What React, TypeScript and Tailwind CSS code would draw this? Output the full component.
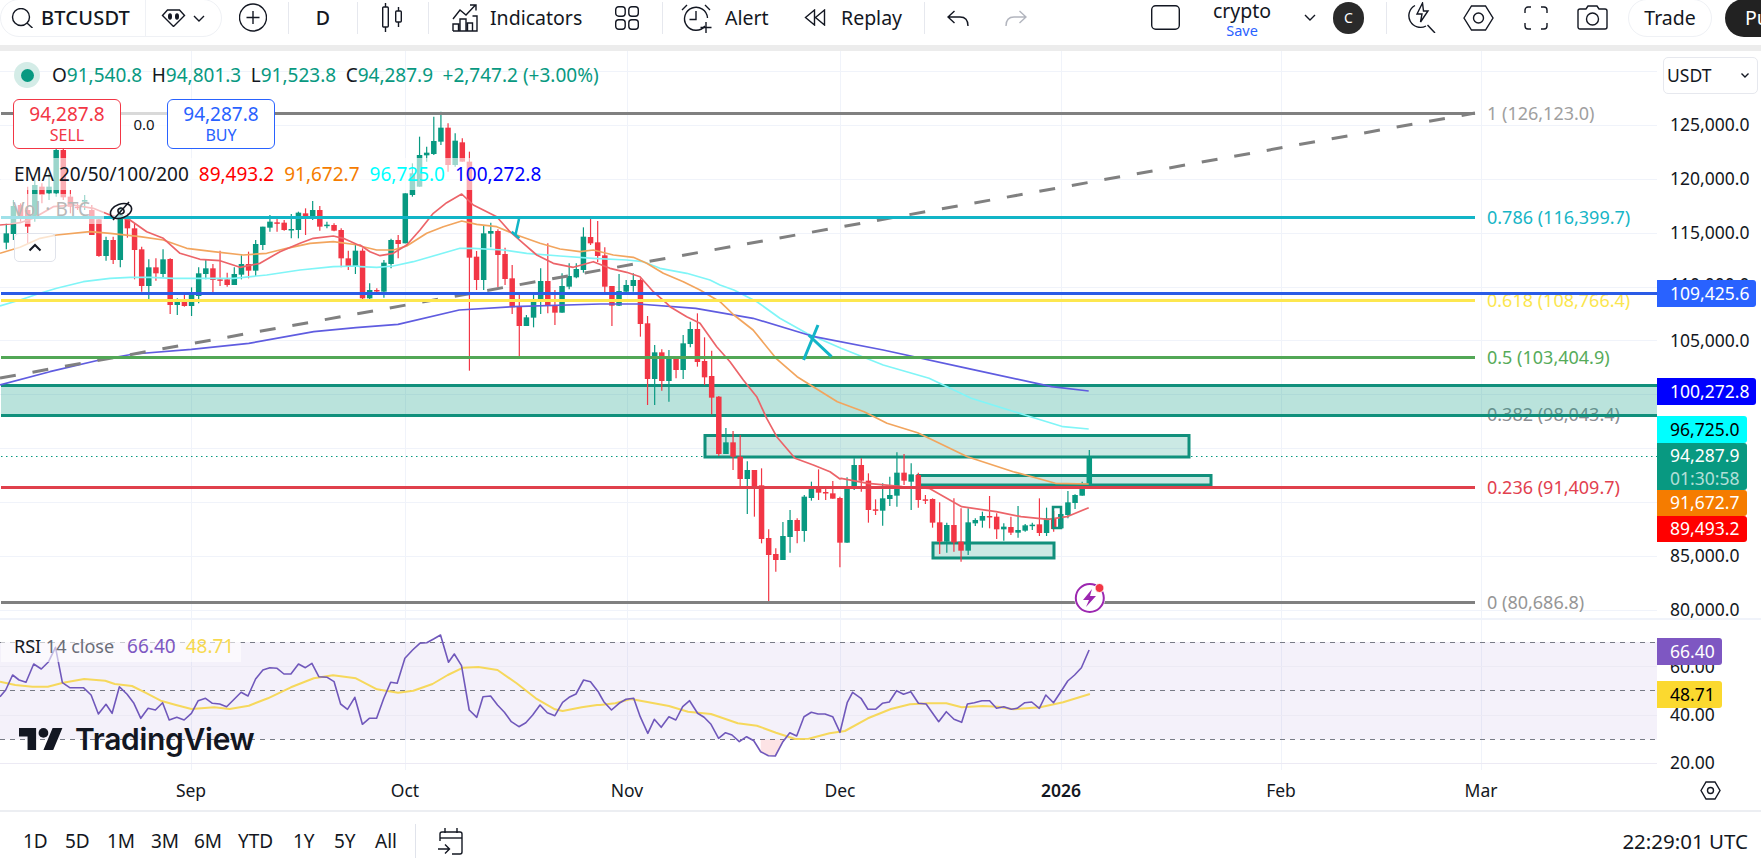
import React from "react";

type Row = [number, number, number, number, number];
const A: Row[] = [
[100,130,158,178,1],[30,48,132,150,1],[40,45,81,95,0],[-10,60,110,160,0],[-30,-15,85,95,1],[-20,-10,15,40,0],[-50,-10,10,30,1],[-150,-120,10,20,1],[-125,-120,22,30,0],[0,20,50,70,0],
[40,50,52,60,0],[15,30,35,60,1],[45,60,135,135,0],[85,88,198,200,0],[140,150,198,212,1],[140,150,210,222,0],[50,75,210,232,1],[70,80,115,143,0],[100,115,180,268,0],[170,178,288,305,0],
[208,232,288,333,1],[205,232,250,272,0],[178,208,252,262,1],[205,207,345,372,0],[325,327,345,375,1],[308,328,348,350,0],[292,310,348,378,1],[232,250,318,340,1],[210,235,252,268,1],[222,235,270,310,0],
[182,268,270,288,0],[248,268,285,290,0],[232,252,285,285,1],[196,222,254,268,1],[185,222,242,265,0],[150,162,242,258,1],[110,110,165,180,1],[75,95,113,125,1],[85,97,100,125,0],[90,98,120,122,0],
[72,117,119,145,1],[65,68,120,145,1],[55,70,84,135,0],[33,60,85,90,1],[48,60,110,122,0],[95,104,106,115,1],[100,105,122,124,0],[115,120,205,232,0],[182,205,228,240,0],[165,182,228,252,1],
];
const B: Row[] = [
[415,422,565,572,0],[520,540,565,572,1],[535,540,543,555,0],[450,458,545,563,1],[386,390,462,475,1],[375,390,402,445,0],[250,250,400,400,1],[160,190,255,260,1],[80,135,230,230,1],[110,128,136,155,1],
[20,93,132,135,1],[5,53,95,105,1],[40,53,165,185,0],[70,92,165,170,1],[85,97,155,155,0],[125,155,443,782,0],[423,440,510,540,0],[345,370,510,540,1],[338,363,371,412,1],[358,363,435,532,0],
[413,432,507,525,0],[465,505,592,612,0],[555,588,648,738,0],[615,622,648,648,1],[555,573,623,652,1],[475,513,575,612,1],[400,513,587,610,0],[540,587,608,645,0],[490,528,608,608,1],[460,498,530,538,1],
[460,477,502,505,1],[352,380,480,488,1],[325,381,400,405,0],[333,397,438,456,0],[412,436,530,555,0],[528,528,587,648,0],[492,543,587,588,1],[510,525,545,548,1],[490,510,528,545,1],[505,510,642,680,0],
];
const C: Row[] = [
[48,70,237,315,0],[135,157,237,315,1],[148,157,243,272,0],[150,173,243,305,1],[172,173,210,235,0],[105,130,210,237,1],[65,87,132,142,1],[40,87,186,200,0],[112,183,232,255,0],[152,228,293,343,0],
[288,290,462,468,0],[384,427,462,462,1],[393,427,470,510,0],[405,470,537,558,0],[484,510,537,642,1],[510,510,562,650,0],[505,556,717,730,0],[688,714,765,905,0],[745,762,780,815,0],[666,708,780,780,1],
[630,660,711,758,1],[655,660,693,730,0],[585,590,693,725,1],[545,562,594,602,1],[508,562,578,600,0],[565,576,578,600,0],[543,580,596,596,0],[590,594,728,802,0],[532,565,728,728,1],
];
const D: Row[] = [
[85,105,175,180,1],[85,105,152,185,0],[130,152,240,278,0],[208,238,241,255,0],[160,205,242,287,1],[140,195,207,228,1],[67,128,197,230,1],[72,128,152,165,0],[100,133,155,240,1],[128,135,210,233,0],
[195,208,210,222,0],[205,207,278,293,0],[217,277,335,372,0],[278,285,335,368,1],[205,285,337,365,0],[235,335,362,395,0],[235,277,362,375,1],[265,270,280,288,1],[245,258,272,293,1],[198,258,260,295,0],
[250,260,298,327,0],[280,290,298,332,1],[260,291,308,315,0],[228,300,308,323,1],[282,286,302,305,1],[278,284,286,300,1],[205,283,309,318,0],[233,265,309,318,1],[243,265,297,305,0],[240,252,295,297,1],
[183,217,255,265,1],[193,195,219,237,1],[155,167,197,197,1],[60,82,165,165,1],
];
const conv = (y0: number, rows: Row[]) => rows.map((r) => ({ hi: y0 + r[0] / 3, top: y0 + r[1] / 3, bot: y0 + r[2] / 3, lo: y0 + r[3] / 3, up: r[4] === 1 }));
const candles = [...conv(190, A), ...conv(110, B), ...conv(300, C), ...conv(430, D)];

const z = (x0: number, y0: number, sx: number, pts: number[][]) => pts.map(([x, y]) => `${(x0 + x / sx).toFixed(1)},${(y0 + y / 3).toFixed(1)}`).join(" ");

const ema20 = [
  z(0, 190, 3, [[0,105],[30,102],[60,98],[100,85],[160,50],[220,45],[280,55],[330,75],[390,90],[440,125],[490,145],[540,190],[600,208],[660,212],[720,232],[780,220],[840,185],[900,160],[940,145],[1000,138],[1030,145],[1075,165]]),
  z(360, 110, 3, [[0,405],[30,425],[60,437],[100,430],[140,405],[180,360],[220,310],[260,278],[305,252],[340,285],[370,300],[410,320],[450,365],[490,400],[530,435],[580,460],[640,472],[700,455],[750,475],[800,487],[840,500],[880,545],[920,580]]),
  z(620, 300, 3, [[150,20],[200,50],[240,70],[290,140],[330,185],[370,240],[410,290],[440,355],[470,410],[525,475],[580,495],[630,515],[660,537]]),
  z(600, 280, 2.613, [[630,595],[700,610],[790,620],[860,625],[945,680],[1035,695],[1100,710],[1170,718],[1220,710],[1277,683]]),
].join(" ");
const ema50 = [
  z(0, 190, 3, [[0,190],[60,172],[120,145],[170,135],[270,125],[330,130],[420,140],[490,150],[560,175],[640,185],[730,195],[800,190],[860,175],[930,160],[1000,155],[1075,165]]),
  z(360, 110, 3, [[0,408],[50,420],[100,420],[140,408],[200,370],[250,350],[305,333],[350,343],[410,350],[470,375],[540,400],[600,417],[660,425],[700,420],[760,435],[820,442],[860,460],[910,490],[970,515],[1020,540],[1080,575]]),
  z(600, 280, 2.613, [[350,105],[400,150],[460,235],[515,290],[620,365],[690,395],[750,430],[830,458],[960,530],[1080,575],[1190,610],[1277,612]]),
].join(" ");
const ema100 = [
  z(0, 190, 3, [[0,348],[60,330],[120,310],[170,295],[250,275],[330,265],[390,262],[450,262],[520,265],[600,265],[700,265],[800,255],[900,240],[1000,230],[1075,228]]),
  z(360, 110, 3, [[0,470],[50,472],[100,468],[160,455],[230,435],[300,415],[340,415],[430,420],[500,430],[600,438],[700,445],[800,450],[850,455],[900,475],[980,490],[1050,510],[1080,525]]),
  z(600, 280, 2.613, [[350,30],[410,65],[470,115],[540,160],[630,205],[740,255],[860,295],[970,355],[1110,405],[1210,440],[1277,447]]),
].join(" ");
const ema200 = [
  z(0, 280, 2.613, [[0,315],[130,275],[260,240],[350,222],[500,208],[650,190],[820,155],[930,143],[1040,133],[1200,90],[1340,80],[1568,72]]),
  z(600, 280, 2.613, [[100,72],[250,85],[400,115],[560,170],[740,210],[960,265],[1180,320],[1277,333]]),
].join(" ");
const rsi = [
  z(0, 600, 2.613, [[0,290],[15,270],[33,225],[50,240],[68,247],[88,192],[108,207],[127,185],[145,142],[163,248],[182,263],[218,263],[238,285],[257,342],[277,313],[293,340],[312,260],[332,283],[350,310],[368,355],[387,325],[406,330],[425,308],[442,360],[462,352],[481,360],[500,340],[518,302],[537,295],[555,310],[574,312],[592,320],[610,300],[630,277],[648,288],[668,237],[687,210],[705,203],[724,205],[742,222],[760,222],[780,192],[798,203],[815,190],[833,230],[855,232],[873,245],[890,312],[908,328],[927,292],[947,373],[965,355],[984,355],[1003,295],[1021,247],[1038,250],[1058,175],[1078,150],[1097,130],[1115,128],[1133,117],[1151,105],[1172,187],[1187,162],[1206,197],[1226,330],[1246,352],[1262,290],[1282,288],[1300,315],[1318,337],[1336,365],[1356,380],[1374,368],[1392,345],[1411,315],[1430,338],[1450,347],[1470,307],[1487,292],[1505,282],[1525,240],[1543,245],[1563,275]]),
  z(600, 600, 2.613, [[0,285],[10,305],[30,330],[50,310],[68,298],[88,295],[105,350],[125,400],[142,358],[160,382],[180,350],[198,360],[216,320],[234,302],[255,340],[272,352],[290,373],[310,415],[328,398],[345,405],[364,425],[383,410],[402,422],[420,455],[440,467],[458,468],[478,425],[496,398],[514,408],[533,350],[552,337],[570,342],[588,342],[608,350],[627,397],[646,308],[660,277],[682,295],[700,328],[720,328],[738,310],[756,306],[775,272],[793,283],[812,275],[832,310],[852,312],[885,365],[905,335],[925,358],[945,367],[960,312],[978,308],[998,302],[1018,302],[1036,325],[1055,320],[1075,328],[1090,325],[1110,308],[1128,306],[1148,325],[1165,285],[1185,308],[1204,275],[1222,243],[1240,225],[1258,203],[1278,150]]),
].join(" ");
const rsiMa = [
  z(0, 600, 2.613, [[0,245],[40,255],[85,260],[125,260],[165,248],[220,237],[275,242],[300,252],[345,258],[380,278],[420,302],[460,315],[500,327],[560,322],[600,327],[650,317],[700,295],[760,262],[820,235],[870,226],[930,235],[985,268],[1040,278],[1080,272],[1130,252],[1170,225],[1210,203],[1250,201],[1300,210],[1350,250],[1400,295],[1450,328],[1470,333],[1520,322],[1560,315]]),
  z(600, 600, 2.613, [[0,315],[40,310],[80,297],[120,305],[180,318],[230,335],[290,342],[360,370],[410,377],[460,398],[510,417],[545,416],[600,400],[640,393],[700,355],[760,327],[810,313],[860,310],[905,310],[945,322],[1000,318],[1040,320],[1080,328],[1150,322],[1210,307],[1280,282]]),
].join(" ");

const gridX = [191, 405, 627, 840, 1061, 1281, 1481];
const gridY = [71.5, 125.5, 179.5, 233.5, 287.5, 340.5, 394.5, 448.5, 502.5, 556.5, 610.5];

const Fib = ({ y, color, end = 1475 }: { y: number; color: string; end?: number }) => (
  <line x1="1" x2={end} y1={y} y2={y} stroke={color} strokeWidth="3" />
);

const fibLabels = [
  { y: 113, c: "#a0a0a0", t: "1 (126,123.0)" },
  { y: 217, c: "#16b5c6", t: "0.786 (116,399.7)" },
  { y: 300, c: "#fbe64f", t: "0.618 (108,766.4)" },
  { y: 357, c: "#56ab5a", t: "0.5 (103,404.9)" },
  { y: 414, c: "#8a8d92", t: "0.382 (98,043.4)" },
  { y: 487, c: "#e2404e", t: "0.236 (91,409.7)" },
  { y: 602, c: "#969696", t: "0 (80,686.8)" },
];

const axisLabels = [
  { y: 125, t: "125,000.0" }, { y: 179, t: "120,000.0" }, { y: 233, t: "115,000.0" }, { y: 285, t: "110,000.0" }, { y: 341, t: "105,000.0" }, { y: 556, t: "85,000.0" }, { y: 610, t: "80,000.0" },
];
const tags = [
  { top: 280, h: 27, w: 99, bg: "bg-[#2962ff]", fg: "text-white", t: "109,425.6" },
  { top: 378, h: 27, w: 99, bg: "bg-[#0000ff]", fg: "text-white", t: "100,272.8" },
  { top: 416, h: 27, w: 90, bg: "bg-[#00ffff]", fg: "text-black", t: "96,725.0" },
  { top: 490, h: 26, w: 90, bg: "bg-[#f57c00]", fg: "text-white", t: "91,672.7" },
  { top: 516, h: 26, w: 90, bg: "bg-[#ff0000]", fg: "text-white", t: "89,493.2" },
];

const Ico = ({ w, h, vb, className = "", children, sw = 1.4 }: { w: number; h: number; vb?: string; className?: string; children: React.ReactNode; sw?: number }) => (
  <svg width={w} height={h} viewBox={vb ?? `0 0 ${w} ${h}`} fill="none" stroke="currentColor" strokeWidth={sw} className={`shrink-0 text-[#131722] ${className}`}>
    {children}
  </svg>
);
const Divider = ({ cls }: { cls: string }) => <div className={`w-px h-[32px] bg-[#e6e8ee] shrink-0 ${cls}`} />;
const Chevron = ({ cls = "" }: { cls?: string }) => (
  <Ico w={12} h={7} className={cls}><polyline points="1,1 6,6 11,1" /></Ico>
);

function TopBar() {
  return (
    <div className="h-[45px] shrink-0 flex items-center pb-[10px] bg-white text-[19.5px] text-[#131722] overflow-hidden">
      <div className="w-[222px] h-[38px] self-start shrink-0 rounded-[19px] border border-[#eff1f5] flex items-center -mt-px">
        <Ico w={22} h={20} className="ml-[10px]"><circle cx="10" cy="9" r="8.5" /><line x1="16" y1="15" x2="21.5" y2="20" /></Ico>
        <span className="ml-[8px] w-[96px] text-[20px] font-medium tracking-[0.2px]">BTCUSDT</span>
        <div className="w-px h-[38px] bg-[#eff1f5] ml-[8px]" />
        <Ico w={25} h={18} className="ml-[15px]">
          <path d="M1.5 6.5 L6.5 1 H18.5 L23.5 6.5 L12.5 17.5 Z" />
          <ellipse cx="9" cy="7.5" rx="1.3" ry="2.5" fill="currentColor" />
          <ellipse cx="16" cy="7.5" rx="1.3" ry="2.5" fill="currentColor" />
        </Ico>
        <Chevron cls="ml-[7px]" />
      </div>
      <Ico w={28} h={29} className="ml-[17px]"><circle cx="14" cy="14.5" r="13.5" /><path d="M14 8v13M7.5 14.5h13" /></Ico>
      <Divider cls="ml-[21px]" />
      <div className="w-[68px] text-center font-medium shrink-0">D</div>
      <Divider cls="" />
      <Ico w={21} h={29} className="ml-[24px]">
        <path d="M3.5 0v4M3.5 24v5M16.5 4v4M16.5 19v5" />
        <rect x="0.7" y="4" width="5.6" height="20" rx="1" />
        <rect x="13.7" y="8" width="5.6" height="11" rx="1" />
      </Ico>
      <Divider cls="ml-[25px]" />
      <Ico w={26} h={28} className="ml-[23px]">
        <path d="M1 15 L8 6 L14 11 L23 1.5 M18 1 h6 v5.5" />
        <path d="M1 27 V20 H6.5 V27 M8 27 V15 H14 V27 M15.5 27 V19 H20.5 V27 M20.5 12 H25 V27 H1" />
      </Ico>
      <span className="ml-[12px] w-[93px] font-normal shrink-0 whitespace-nowrap">Indicators</span>
      <Ico w={24} h={24} className="ml-[32px]">
        <rect x="0.7" y="0.7" width="9.5" height="9.5" rx="3" /><rect x="13.8" y="0.7" width="9.5" height="9.5" rx="3" />
        <rect x="0.7" y="13.8" width="9.5" height="9.5" rx="3" /><rect x="13.8" y="13.8" width="9.5" height="9.5" rx="3" />
      </Ico>
      <Divider cls="ml-[23px]" />
      <Ico w={31} h={30} className="ml-[18px]">
        <path d="M24 23 A11.5 11.5 0 1 1 26.5 15" />
        <path d="M15 8v8.5H8.5" />
        <path d="M1 7 L6 2 M24 2 L29 7" />
        <path d="M25 19v11M19.5 24.5h11" />
      </Ico>
      <span className="ml-[13px] w-[45px] shrink-0">Alert</span>
      <Ico w={22} h={17} className="ml-[34px]">
        <path d="M10.5 1 L1.5 8.5 L10.5 16 Z M20.5 1 L11.5 8.5 L20.5 16 Z" />
      </Ico>
      <span className="ml-[15px] w-[61px] shrink-0">Replay</span>
      <Divider cls="ml-[22px]" />
      <Ico w={22} h={16} className="ml-[22px]"><path d="M7.5 1 L1 7 L7.5 13 M1 7 H13 C18 7 21 10 21 16" /></Ico>
      <Ico w={22} h={16} className="ml-[36px] !text-[#b2b5be]"><path d="M14.5 1 L21 7 L14.5 13 M21 7 H9 C4 7 1 10 1 16" /></Ico>
      <Ico w={29} h={25} className="ml-[124px]"><rect x="0.7" y="0.7" width="27.6" height="23.6" rx="4" /></Ico>
      <div className="ml-[32px] w-[60px] shrink-0 self-start mt-[1px] flex flex-col items-center">
        <span className="text-[19.5px] leading-[19px]">crypto</span>
        <span className="text-[14.5px] leading-[15px] mt-[3px] text-[#2962ff]">Save</span>
      </div>
      <Chevron cls="ml-[32px]" />
      <div className="ml-[17px] w-[31px] h-[32px] rounded-full bg-[#2a2a2a] text-white text-[14px] flex items-center justify-center shrink-0">C</div>
      <Divider cls="ml-[22px]" />
      <Ico w={28} h={31} className="ml-[21px]">
        <path d="M7 3.5 A11 11 0 0 0 18 24" />
        <path d="M14.5 1 L9 12 H14 L12.5 20 L20 9 H15.5 Z" />
        <path d="M19.5 23 L27 31" />
      </Ico>
      <Ico w={31} h={26} className="ml-[27px]"><polygon points="1,13 8.5,1 22.5,1 30,13 22.5,25 8.5,25" /><circle cx="15.5" cy="13" r="5" /></Ico>
      <Ico w={24} h={24} className="ml-[30px]"><path d="M7 1H4a3 3 0 0 0-3 3v3M17 1h3a3 3 0 0 1 3 3v3M7 23H4a3 3 0 0 1-3-3v-3M17 23h3a3 3 0 0 0 3-3v-3" /></Ico>
      <Ico w={31} h={25} className="ml-[29px]">
        <path d="M3 4 H9 L11 1 H20 L22 4 H28 a2 2 0 0 1 2 2 V22 a2 2 0 0 1 -2 2 H3 a2 2 0 0 1 -2 -2 V6 a2 2 0 0 1 2 -2 Z" />
        <circle cx="15.5" cy="14" r="6" />
      </Ico>
      <div className="ml-[20px] w-[84px] h-[38px] self-start -mt-px shrink-0 rounded-[19px] border border-[#eff1f5] flex items-center justify-center">Trade</div>
      <div className="ml-[13px] w-[110px] h-[38px] self-start -mt-px shrink-0 rounded-[19px] bg-[#222222] text-white flex items-center pl-[20px]">Publish</div>
    </div>
  );
}

function Legend() {
  return (
    <div className="absolute left-[1px] top-0 flex flex-col items-start text-[19px] leading-none whitespace-nowrap">
      <div className="mt-[11px] h-[26px] flex items-center ml-[13px]">
        <div className="w-[26px] h-[26px] rounded-full bg-[#d4ece7] flex items-center justify-center">
          <div className="w-[13px] h-[13px] rounded-full bg-[#089981]" />
        </div>
        <div className="ml-[12px] flex gap-[9.5px] text-[#089981]">
          <span><span className="text-[#131722]">O</span>91,540.8</span>
          <span><span className="text-[#131722]">H</span>94,801.3</span>
          <span><span className="text-[#131722]">L</span>91,523.8</span>
          <span><span className="text-[#131722]">C</span>94,287.9</span>
          <span>+2,747.2 (+3.00%)</span>
        </div>
      </div>
      <div className="mt-[11px] h-[50px] flex ml-[12px]">
        <div className="w-[108px] h-[50px] rounded-[6px] border border-[#f23645] bg-white flex flex-col items-center justify-center text-[#f23645]">
          <span className="text-[19px] leading-[23px] -mt-[2px]">94,287.8</span>
          <span className="text-[16px] leading-[18px]">SELL</span>
        </div>
        <div className="w-[46px] h-[50px] bg-white/70 flex items-center justify-center text-[15px] text-[#131722]"><span>0.0</span></div>
        <div className="w-[108px] h-[50px] rounded-[6px] border border-[#2962ff] bg-white flex flex-col items-center justify-center text-[#2962ff]">
          <span className="text-[19px] leading-[23px] -mt-[2px]">94,287.8</span>
          <span className="text-[16px] leading-[18px]">BUY</span>
        </div>
      </div>
      <div className="mt-[9px] h-[32px] pl-[13px] pr-[4px] flex items-center gap-[10px] bg-white/60">
        <span className="text-[#131722]">EMA 20/50/100/200</span>
        <span className="text-[#ff0000]">89,493.2</span>
        <span className="text-[#f57c00]">91,672.7</span>
        <span className="text-[#00ffff]">96,725.0</span>
        <span className="text-[#0000ff]">100,272.8</span>
      </div>
      <div className="mt-[4px] h-[30px] w-[103px] pl-[12px] flex items-center bg-white/60 text-[#b8b8b8]">Vol · BTC</div>
      <div className="mt-[9px] ml-[13px] w-[42px] h-[29px] rounded-[5px] border border-[#e0e3eb] bg-white/70 flex items-center justify-center">
        <Ico w={14} h={9} sw={2}><polyline points="1.5,7.5 7,2 12.5,7.5" /></Ico>
      </div>
    </div>
  );
}

function MainPane() {
  return (
    <div className="relative h-[567px] overflow-hidden">
      <svg width="1657" height="567" viewBox="0 51 1657 567" className="absolute inset-0">
        {gridX.map((x) => <line key={x} x1={x + 0.5} x2={x + 0.5} y1="51" y2="618" stroke="#f0f3fa" />)}
        {gridY.map((y) => <line key={y} x1="0" x2="1657" y1={y} y2={y} stroke="#f0f3fa" />)}
        {fibLabels.map((f) => (
          <text key={f.t} x="1487" y={f.y + 6.5} fill={f.c} fontSize="18" fontFamily="'Noto Sans', sans-serif">{f.t}</text>
        ))}
        <rect x="1" y="385" width="1656" height="30" fill="#089981" fillOpacity="0.28" />
        <rect x="705" y="435.5" width="484" height="21.5" fill="#089981" fillOpacity="0.21" stroke="#11907c" strokeWidth="3" />
        <rect x="918" y="475.5" width="293" height="9.5" fill="#089981" fillOpacity="0.21" stroke="#11907c" strokeWidth="3" />
        <rect x="933" y="543" width="121" height="15" fill="#089981" fillOpacity="0.21" stroke="#11907c" strokeWidth="3" />
        <line x1="1" x2="1657" y1="385.5" y2="385.5" stroke="#11907c" strokeWidth="3" />
        <line x1="1" x2="1657" y1="415.5" y2="415.5" stroke="#11907c" strokeWidth="3" />
        <line x1="1" x2="1657" y1="456.5" y2="456.5" stroke="#089981" strokeWidth="1" strokeDasharray="1.5 3.5" />
        {candles.map((c, i) => {
          const x = 6.3 + 7.125 * i;
          const col = c.up ? "#089981" : "#f23645";
          return (
            <g key={i}>
              <line x1={x} x2={x} y1={c.hi} y2={c.lo} stroke={col} strokeWidth="1.2" />
              <rect x={x - 2.75} y={c.top} width="5.5" height={Math.max(c.bot - c.top, 1.5)} fill={col} />
            </g>
          );
        })}
        <polyline points={ema100} fill="none" stroke="#80f5f7" strokeWidth="1.7" strokeLinejoin="round" />
        <polyline points={ema200} fill="none" stroke="#5f5ce0" strokeWidth="1.7" strokeLinejoin="round" />
        <polyline points={ema50} fill="none" stroke="#f2a55e" strokeWidth="1.7" strokeLinejoin="round" />
        <polyline points={ema20} fill="none" stroke="#ec6469" strokeWidth="1.7" strokeLinejoin="round" />
        <line x1="0" y1="378" x2="1475" y2="113" stroke="#808080" strokeWidth="3" strokeDasharray="16 17" />
        <Fib y={113.5} color="#808080" />
        <Fib y={217.5} color="#12b5c7" />
        <Fib y={300.5} color="#fde74f" />
        <line x1="1" x2="1657" y1="293.5" y2="293.5" stroke="#2a5be6" strokeWidth="3" />
        <Fib y={357.5} color="#52a756" />
        <Fib y={487.5} color="#e0404c" />
        <Fib y={602.5} color="#808080" />
        <path d="M818 325 L803.6 360 M808.6 335 L831.5 356.7" stroke="#12b5c7" strokeWidth="3" fill="none" />
        <path d="M519 219 L515.7 234 M511.7 231.7 L519.3 238.3" stroke="#12b5c7" strokeWidth="2.5" fill="none" />
        <rect x="1053" y="507" width="8" height="21" fill="none" stroke="#11907c" strokeWidth="2.5" />
        <g transform="rotate(-20 121 211)" stroke="#131722" strokeWidth="1.5" fill="none">
          <ellipse cx="121" cy="211" rx="11" ry="7" fill="#ffffff" fillOpacity="0.6" />
          <circle cx="121" cy="211" r="3" />
        </g>
        <line x1="113" y1="220" x2="129" y2="202" stroke="#131722" strokeWidth="1.5" />
        <circle cx="1089.8" cy="598" r="15.5" fill="#ffffff" />
        <circle cx="1089.8" cy="598" r="14" fill="#ffffff" stroke="#9c27b0" strokeWidth="2" />
        <polygon points="1092,589 1083,600 1089,600 1086,607 1096,596 1090,596" fill="#9c27b0" />
        <circle cx="1099.5" cy="588" r="4.5" fill="#f23645" stroke="#ffffff" strokeWidth="1" />
      </svg>
      <Legend />
    </div>
  );
}

function RsiPane() {
  return (
    <div className="relative h-[150px] overflow-hidden">
      <svg width="1657" height="150" viewBox="0 620 1657 150" className="absolute inset-0">
        {gridX.map((x) => <line key={x} x1={x + 0.5} x2={x + 0.5} y1="620" y2="770" stroke="#f0f3fa" />)}
        <rect x="0" y="642" width="1657" height="97.5" fill="#7e57c2" fillOpacity="0.085" />
        {[666.5, 715.5, 763.5].map((y) => <line key={y} x1="0" x2="1657" y1={y} y2={y} stroke="#eceaf4" />)}
        {[642.5, 690.5, 739.5].map((y) => <line key={y} x1="0" x2="1657" y1={y} y2={y} stroke="#787b86" strokeDasharray="5 5" />)}
        <path d={`M760.7 739.5 L760.7 751.7 L768.4 755.7 L775.3 756 L783 741 L784 739.5 Z`} fill="#f23645" fillOpacity="0.14" />
        <polyline points={rsiMa} fill="none" stroke="#f6d85c" strokeWidth="2" strokeLinejoin="round" />
        <polyline points={rsi} fill="none" stroke="#7058bb" strokeWidth="1.6" strokeLinejoin="round" />
      </svg>
      <div className="absolute left-[1px] top-[10px] h-[32px] w-[240px] pl-[13px] flex items-center bg-white/60 text-[18px] whitespace-nowrap">
        <span className="text-[#6a6d78]"><span className="text-[#131722]">RSI</span> 14 close</span>
        <span className="ml-[13px] text-[19px] text-[#7e57c2]">66.40</span>
        <span className="ml-[10px] text-[19px] text-[#f7d94f]">48.71</span>
      </div>
      <div className="absolute left-[19px] top-[104px] flex items-center gap-[12px] text-[#131722]">
        <svg width="44" height="22" viewBox="0 4 36 18" className="shrink-0">
          <path d="M14 22H7V11H0V4h14v18zM28 22h-8l7.5-18h8L28 22z" fill="currentColor" />
          <circle cx="20" cy="8" r="4" fill="currentColor" />
        </svg>
        <span className="text-[30px] leading-[30px] font-semibold tracking-[-0.3px]" style={{ fontFamily: "Inter, sans-serif" }}>TradingView</span>
      </div>
    </div>
  );
}

function PriceAxis() {
  return (
    <div className="w-[104px] shrink-0 flex flex-col text-[17.5px] leading-none text-[#131722]">
      <div className="relative h-[567px]">
        <div className="absolute left-[6px] top-[6px] w-[95px] h-[37px] border border-[#e6e8ee] rounded-[5px] flex items-center justify-between pl-[3px] pr-[8px] bg-white">
          <span>USDT</span>
          <Ico w={8} h={5} sw={1.4}><polyline points="0.5,0.5 4,4 7.5,0.5" /></Ico>
        </div>
        {axisLabels.map((a) => (
          <span key={a.t} className="absolute left-[13px]" style={{ top: a.y - 51 - 9 }}>{a.t}</span>
        ))}
        {tags.map((t) => (
          <div key={t.t} className={`absolute left-0 flex items-center pl-[13px] rounded-r-[3px] ${t.bg} ${t.fg}`} style={{ top: t.top - 51, height: t.h, width: t.w }}>{t.t}</div>
        ))}
        <div className="absolute left-0 top-[392px] w-[90px] h-[47px] bg-[#089981] rounded-r-[3px] pl-[13px] flex flex-col justify-center text-white">
          <span className="leading-[23px]">94,287.9</span>
          <span className="leading-[22px] text-white/70">01:30:58</span>
        </div>
      </div>
      <div className="h-[2px] bg-[#f0f3fa]" />
      <div className="relative h-[150px]">
        {[{ y: 667, t: "60.00" }, { y: 715, t: "40.00" }, { y: 763, t: "20.00" }].map((a) => (
          <span key={a.t} className="absolute left-[13px]" style={{ top: a.y - 620 - 9 }}>{a.t}</span>
        ))}
        <div className="absolute left-0 top-[18px] w-[65px] h-[27px] bg-[#7e57c2] text-white rounded-r-[3px] flex items-center pl-[13px]">66.40</div>
        <div className="absolute left-0 top-[61px] w-[65px] h-[27px] bg-[#fbd92f] text-black rounded-r-[3px] flex items-center pl-[13px]">48.71</div>
      </div>
    </div>
  );
}

const timeLabels = [
  { x: 191, t: "Sep" }, { x: 405, t: "Oct" }, { x: 627, t: "Nov" }, { x: 840, t: "Dec" }, { x: 1061, t: "2026", b: true }, { x: 1281, t: "Feb" }, { x: 1481, t: "Mar" },
];
const ranges = [
  { t: "1D", w: 42 }, { t: "5D", w: 42 }, { t: "1M", w: 44 }, { t: "3M", w: 43 }, { t: "6M", w: 44 }, { t: "YTD", w: 55 }, { t: "1Y", w: 41 }, { t: "5Y", w: 41 }, { t: "All", w: 25 },
];

export default function App() {
  return (
    <div className="w-[1761px] h-[863px] overflow-hidden bg-white flex flex-col" style={{ fontFamily: "'Noto Sans', sans-serif" }}>
      <TopBar />
      <div className="h-[6px] shrink-0 bg-[#ececec]" />
      <div className="flex flex-1 flex-col min-h-0 rounded-tl-[4px] bg-white">
        <div className="flex h-[719px] shrink-0">
          <div className="w-[1657px] shrink-0 flex flex-col">
            <MainPane />
            <div className="h-[2px] bg-[#f0f3fa]" />
            <RsiPane />
          </div>
          <PriceAxis />
        </div>
        <div className="relative h-[42px] shrink-0 border-b-2 border-[#eceef2] text-[17.5px] text-[#131722] leading-none">
          {timeLabels.map((l) => (
            <span key={l.t} className={`absolute top-[12px] -translate-x-1/2 ${l.b ? "font-semibold" : ""}`} style={{ left: l.x }}>{l.t}</span>
          ))}
          <Ico w={21} h={19} className="absolute left-[1700px] top-[11px]"><polygon points="1,9.5 6,1 15,1 20,9.5 15,18 6,18" /><circle cx="10.5" cy="9.5" r="3" /></Ico>
        </div>
        <div className="flex-1 flex items-center pt-[7px] text-[19px] text-[#131722] pl-[23px]">
          {ranges.map((r) => <span key={r.t} className="shrink-0" style={{ width: r.w }}>{r.t}</span>)}
          <div className="w-px h-[34px] bg-[#e0e3eb] ml-[15px] shrink-0" />
          <Ico w={28} h={27} className="ml-[21px]">
            <path d="M8 0v5M20 0v5M3 13V6a2 2 0 0 1 2-2h18a2 2 0 0 1 2 2v18a2 2 0 0 1-2 2H15" />
            <path d="M3 10h22" />
            <path d="M1 21h11M8 16.5l4.5 4.5L8 25.5" />
          </Ico>
          <span className="ml-auto mr-[13px] text-[20.5px]">22:29:01 UTC</span>
        </div>
      </div>
    </div>
  );
}
